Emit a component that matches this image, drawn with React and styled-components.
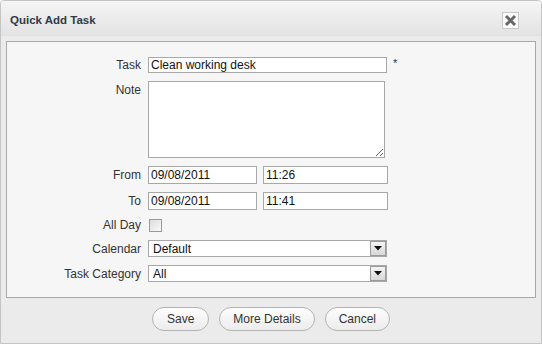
import React from "react";
import styled, { createGlobalStyle } from "styled-components";

const GlobalStyle = createGlobalStyle`
  html, body { margin: 0; padding: 0; background: #ffffff; }
  body { font-family: "Liberation Sans", Arial, sans-serif; font-size: 12px; color: #333; }
  * { box-sizing: border-box; }
`;

const Dialog = styled.div`
  width: 542px;
  height: 344px;
  border: 1px solid #c4c4c4;
  border-radius: 4px 4px 0 0;
  background: #ebebeb;
  display: flex;
  flex-direction: column;
  overflow: hidden;
`;

const TitleBar = styled.div`
  height: 35px;
  flex: none;
  display: flex;
  align-items: center;
  justify-content: space-between;
  padding: 0 22px 0 9px;
  background: linear-gradient(#f5f5f5, #e3e3e3);
  border-bottom: 1px solid #e0e0e0;
`;

const Title = styled.div`
  font-weight: bold;
  font-size: 11.5px;
  color: #2f3a48;
  padding-top: 3px;
`;

const CloseButton = styled.button`
  width: 17px;
  height: 17px;
  padding: 0;
  margin-top: 4px;
  border: 1px solid #c8c8c8;
  background: #fbfbfb;
  display: flex;
  align-items: center;
  justify-content: center;
`;

const Panel = styled.div`
  margin: 5px 5px 0 5px;
  height: 257px;
  flex: none;
  border: 1px solid #a9a9a9;
  background: #f6f6f6;
  padding: 15px 0 0 0;
`;

const Form = styled.div`
  display: grid;
  grid-template-columns: 134px auto;
  column-gap: 7px;
  row-gap: 8px;
  align-items: center;
`;

const Label = styled.div`
  text-align: right;
  color: #333;
  font-size: 12px;
  align-self: ${(p) => (p.$top ? "start" : "center")};
  padding-top: ${(p) => (p.$top ? "2px" : "0")};
`;

const FieldRow = styled.div`
  display: flex;
  align-items: center;
  gap: ${(p) => p.$gap || 0}px;
`;

const TextInput = styled.input`
  width: ${(p) => p.$w}px;
  height: ${(p) => p.$h || 17}px;
  border: 1px solid #a8a8a8;
  background: #fff;
  font-family: "Liberation Sans", Arial, sans-serif;
  font-size: 12px;
  color: #111;
  padding: 0 2px;
  margin: 0;
  outline: none;
`;

const Required = styled.span`
  margin-left: 6px;
  margin-top: -4px;
  font-size: 11px;
  color: #333;
`;

const TextArea = styled.textarea`
  width: 237px;
  height: 77px;
  border: 1px solid #a8a8a8;
  background: #fff;
  margin: 0;
  padding: 2px;
  resize: both;
  outline: none;
  display: block;
`;

const CheckBox = styled.div`
  width: 13px;
  height: 13px;
  margin: 1px 0 0 1px;
  border: 1px solid #9a9a9a;
  background: linear-gradient(135deg, #dcdcdc, #fafafa);
`;

const Select = styled.div`
  width: 239px;
  height: 17px;
  border: 1px solid #a8a8a8;
  background: #fff;
  display: flex;
  align-items: center;
  justify-content: space-between;
  padding: 0 0 0 4px;
  font-size: 12px;
  color: #111;
`;

const DropButton = styled.div`
  width: 16px;
  height: 15px;
  border: 1px solid #9c9c9c;
  background: linear-gradient(#f4f4f4, #d8d8d8);
  display: flex;
  align-items: center;
  justify-content: center;
`;

const Footer = styled.div`
  display: flex;
  justify-content: center;
  gap: 10px;
  padding-top: 9px;
`;

const Button = styled.button`
  height: 24px;
  padding: 0 ${(p) => p.$pad || 13}px;
  border: 1px solid #b3b3b3;
  border-radius: 12px;
  background: linear-gradient(#fdfdfd, #ececec);
  font-family: "Liberation Sans", Arial, sans-serif;
  font-size: 12px;
  color: #333;
`;

const Arrow = () => (
  <svg width="8" height="5" viewBox="0 0 8 5">
    <path d="M0 0 H8 L4 4.5 Z" fill="#111" />
  </svg>
);

const CloseIcon = () => (
  <svg width="13" height="13" viewBox="0 0 13 13">
    <path d="M2 2 L11 11 M11 2 L2 11" stroke="#666" strokeWidth="3" />
  </svg>
);

export default function App() {
  return (
    <>
      <GlobalStyle />
      <Dialog>
        <TitleBar>
          <Title>Quick Add Task</Title>
          <CloseButton aria-label="close">
            <CloseIcon />
          </CloseButton>
        </TitleBar>
        <Panel>
          <Form>
            <Label>Task</Label>
            <FieldRow>
              <TextInput $w={239} $h={16} defaultValue="Clean working desk" />
              <Required>*</Required>
            </FieldRow>

            <Label $top>Note</Label>
            <FieldRow>
              <TextArea />
            </FieldRow>

            <Label>From</Label>
            <FieldRow $gap={6}>
              <TextInput $w={109} $h={18} defaultValue="09/08/2011" />
              <TextInput $w={125} $h={18} defaultValue="11:26" />
            </FieldRow>

            <Label>To</Label>
            <FieldRow $gap={6}>
              <TextInput $w={109} $h={18} defaultValue="09/08/2011" />
              <TextInput $w={125} $h={18} defaultValue="11:41" />
            </FieldRow>

            <Label>All Day</Label>
            <FieldRow>
              <CheckBox />
            </FieldRow>

            <Label>Calendar</Label>
            <FieldRow>
              <Select>
                <span>Default</span>
                <DropButton>
                  <Arrow />
                </DropButton>
              </Select>
            </FieldRow>

            <Label>Task Category</Label>
            <FieldRow>
              <Select>
                <span>All</span>
                <DropButton>
                  <Arrow />
                </DropButton>
              </Select>
            </FieldRow>
          </Form>
        </Panel>
        <Footer>
          <Button $pad={14}>Save</Button>
          <Button $pad={13}>More Details</Button>
          <Button $pad={13}>Cancel</Button>
        </Footer>
      </Dialog>
    </>
  );
}
